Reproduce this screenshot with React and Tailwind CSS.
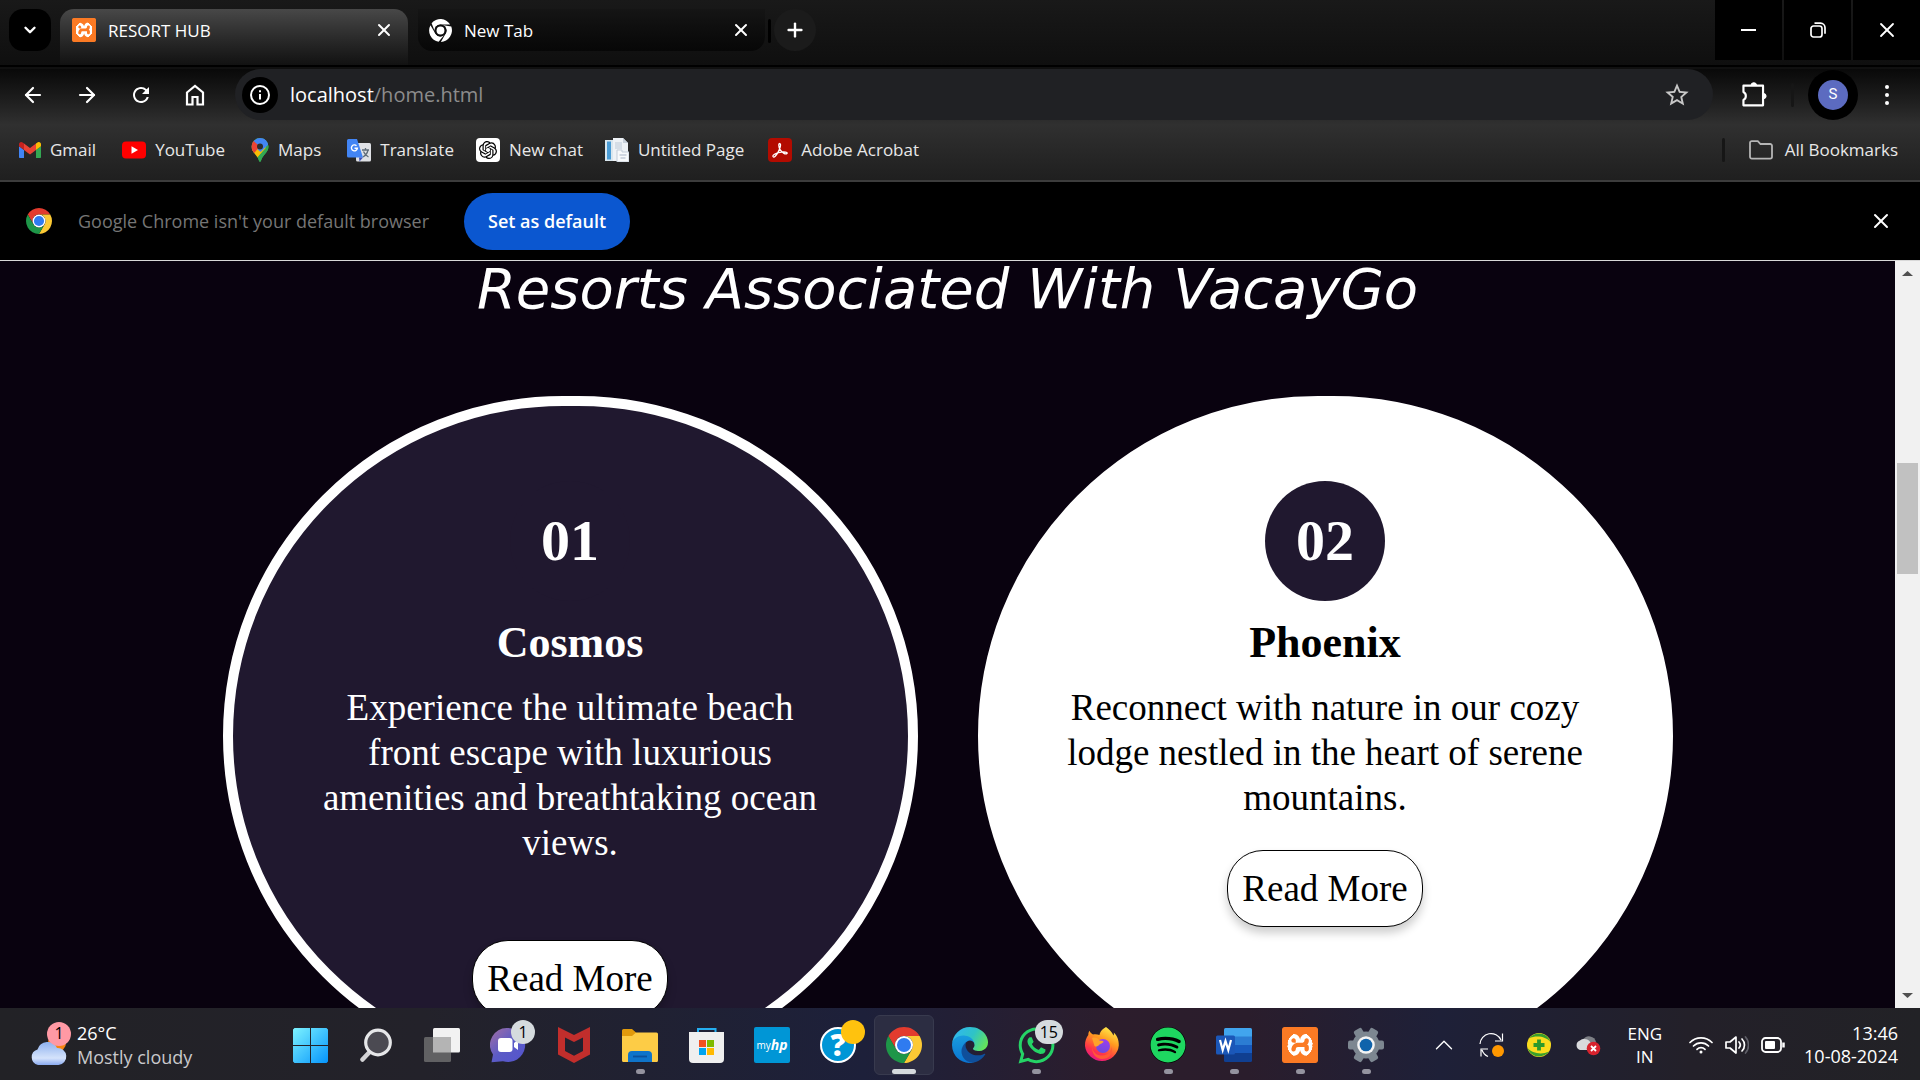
import React from "react";
import { ArrowLeft, ArrowRight, ChevronDown, ChevronUp, Plus, X } from "lucide-react";
import { MdRefresh, MdStarBorder } from "react-icons/md";
import { SiXampp, SiOpenai } from "react-icons/si";
import { FaSpotify, FaWhatsapp } from "react-icons/fa";

const UI = "font-['Segoe_UI','Open_Sans',sans-serif]";
const SERIF = "font-['Goudy_Old_Style','Liberation_Serif',serif]";

function Chrome({ className }) {
  const seg = "M24 13H43.05A22 22 0 0 0 4.95 13L14.47 29.5A11 11 0 0 1 24 13Z";
  return (
    <svg viewBox="2 2 44 44" className={className} aria-hidden="true">
      <path d={seg} fill="#e33b2e" />
      <path d={seg} fill="#fcc934" transform="rotate(120 24 24)" />
      <path d={seg} fill="#1e9648" transform="rotate(240 24 24)" />
      <circle cx="24" cy="24" r="11" fill="#fff" />
      <circle cx="24" cy="24" r="8.6" fill="#2f7bf0" />
    </svg>
  );
}

function ChromeMono({ className }) {
  const seg = "M24 12.5H42.5A22 22 0 0 0 7 10L13.5 27A11 11 0 0 1 24 12.5Z";
  return (
    <svg viewBox="2 2 44 44" className={className} fill="#fff" aria-hidden="true">
      <path d={seg} />
      <path d={seg} transform="rotate(120 24 24)" />
      <path d={seg} transform="rotate(240 24 24)" />
      <circle cx="24" cy="24" r="11.5" fill="#0c0c0c" />
      <circle cx="24" cy="24" r="7.5" />
    </svg>
  );
}

function Xampp({ className }) {
  return (
    <span className={`${className} overflow-hidden bg-[#fb7a24]`}>
      <span className="flex size-full items-center justify-center bg-[radial-gradient(closest-side,#fff_70%,#fb7a24_71%)]">
        <SiXampp className="size-full text-[#fb7a24]" />
      </span>
    </span>
  );
}

function Gmail() {
  return (
    <svg viewBox="52 42 88 66" className="w-[22px]" aria-hidden="true">
      <path fill="#4285f4" d="M58 108h14V74L52 59v43c0 3.32 2.69 6 6 6" />
      <path fill="#34a853" d="M120 108h14c3.32 0 6-2.69 6-6V59l-20 15" />
      <path fill="#fbbc04" d="M120 48v26l20-15v-8c0-7.42-8.47-11.65-14.4-7.2" />
      <path fill="#ea4335" d="M72 74V48l24 18 24-18v26L96 92" />
      <path fill="#c5221f" d="M52 51v8l20 15V48l-5.6-4.2c-5.94-4.45-14.4-.22-14.4 7.2" />
    </svg>
  );
}

function YouTube() {
  return (
    <svg viewBox="0 0 24 18" className="w-6" aria-hidden="true">
      <rect width="24" height="17" y=".5" rx="4" fill="#f00" />
      <path d="M9.5 5.2v7.6L16 9z" fill="#fff" />
    </svg>
  );
}

function MapsPin() {
  return (
    <svg viewBox="0 0 18 24" className="h-6" aria-hidden="true">
      <clipPath id="pin">
        <path d="M9 0a8.5 8.5 0 0 0-8.5 8.5c0 3 1.5 5 3.5 7.500 2 2.500 3.300 4 4 6.800.3 1.400 1.700 1.400 2 0 .7-2.800 2-4.300 4-6.800s3.500-4.500 3.500-7.500A8.500 8.500 0 0 0 9 0z" />
      </clipPath>
      <g clipPath="url(#pin)">
        <rect width="18" height="24" fill="#34a853" />
        <path d="M-1 13.500 9 3l6 7-11.500 13z" fill="#fbbc04" />
        <path d="M18 6 9.500 14 5 10 15-2h4z" fill="#4285f4" />
        <path d="M18 6.500 9 16.500 3 24h15z" fill="#34a853" />
        <path d="M-2 1 3 2.500 9 8l-7.500 9z" fill="#ea4335" />
        <path d="M2.500 3 9-2l7 4-7 6.500z" fill="#4285f4" />
      </g>
      <circle cx="9" cy="8.400" r="3" fill="#2d2d2d" />
    </svg>
  );
}

function Translate() {
  return (
    <svg viewBox="0 0 24 24" className="w-6" aria-hidden="true">
      <rect x="9" y="5" width="15" height="18.500" rx="1.500" fill="#dfe1e5" />
      <path d="M15 12h7M18.500 10v2M21 12c-.6 3-2.500 5.500-5 7M16.500 13.500c1 2.500 3 4.500 5 5.500" stroke="#5f6c78" strokeWidth="1.300" fill="none" />
      <path d="M1.500 1H10l6 18.500H1.500A1.500 1.500 0 0 1 0 18V2.500A1.500 1.500 0 0 1 1.500 1z" fill="#4285f4" />
      <path d="m12 19.500 4 0-3.500 4z" fill="#3c50b8" />
      <path d="M9.500 7.700a3 3 0 1 0 .9 2.500H7.500" stroke="#fff" strokeWidth="1.400" fill="none" />
    </svg>
  );
}

function PageIcon() {
  return (
    <svg viewBox="0 0 24 24" className="w-6" aria-hidden="true">
      <path d="M0 2h10v21H0z" fill="#d9e6ee" />
      <path d="M2 3.500h4v18H2z" fill="#4a9cd6" />
      <path d="M8 0h10l5 5v18H8z" fill="#eef2f6" />
      <path d="M18 0v5h5z" fill="#c7d0da" />
      <path d="M10 4h7v7h-7z" fill="#d5dde6" />
      <path d="M12 12h5v2h7v10H12z" fill="#f8fafc" stroke="#c2ccd8" />
      <path d="M14.500 17h7M15.500 20h5" stroke="#c2ccd8" strokeWidth="1.500" />
    </svg>
  );
}

function Acrobat() {
  return (
    <svg viewBox="0 0 24 24" className="w-6" aria-hidden="true">
      <rect width="24" height="24" rx="4" fill="#b30b00" />
      <path d="M5 18.500c-.8-1.200 3-3.300 5.500-3.900s6.500-1.300 8.300 0c1.300 1.200-1 1.900-3.200.5-2.600-1.700-4.700-4.600-4.800-7.800 0-2.400 1.900-2.400 1.700.2-.2 3.500-3.600 9.300-5.500 11-.8.700-1.600.700-2 0z" fill="none" stroke="#fff" strokeWidth="1.300" />
    </svg>
  );
}

const bookmarks = [
  { label: "Gmail", icon: <Gmail />, pad: "pr-[26px]" },
  { label: "YouTube", icon: <YouTube />, pad: "pr-[26px]" },
  { label: "Maps", icon: <MapsPin />, pad: "pr-[26px]" },
  { label: "Translate", icon: <Translate />, pad: "pr-[22px]" },
  {
    label: "New chat",
    icon: (
      <span className="flex size-6 items-center justify-center rounded bg-white">
        <SiOpenai className="size-[18px] text-black" />
      </span>
    ),
    pad: "pr-[22px]",
  },
  { label: "Untitled Page", icon: <PageIcon />, pad: "pr-6" },
  { label: "Adobe Acrobat", icon: <Acrobat />, pad: "" },
];

function TabStrip() {
  return (
    <div className="flex h-[65px] shrink-0 items-start bg-linear-to-b from-[#191919] to-[#0f0f0f] text-[17px] text-white">
      <button aria-label="Search tabs" className="mt-[9px] ml-[9px] flex size-[42px] shrink-0 items-center justify-center rounded-[14px] bg-black">
        <ChevronDown className="size-[18px]" strokeWidth={3.2} />
      </button>
      <div className="mt-[9px] ml-[9px] flex h-14 w-[348px] items-start rounded-t-[14px] bg-linear-to-b from-[#484848] to-[#121212]">
        <div className="flex h-[42px] w-full items-center pr-[14px] pl-3">
          <Xampp className="size-6 rounded-[2px]" />
          <span className="ml-3 pt-[2px]">RESORT HUB</span>
          <button aria-label="Close RESORT HUB" className="ml-auto">
            <X className="size-5" strokeWidth={2.4} />
          </button>
        </div>
      </div>
      <div className="mt-[9px] ml-[10px] flex h-[42px] w-[347px] items-center rounded-b-[14px] bg-linear-to-b from-[#151515] to-[#070707] pr-[14px] pl-[11px]">
        <ChromeMono className="size-[23px]" />
        <span className="ml-3 pt-[2px]">New Tab</span>
        <button aria-label="Close New Tab" className="ml-auto">
          <X className="size-5" strokeWidth={2.4} />
        </button>
      </div>
      <span className="mt-[19px] ml-[3px] h-6 w-[3px] rounded bg-black" />
      <button aria-label="New tab" className="mt-[9px] ml-[3px] flex size-[42px] items-center justify-center rounded-full bg-[#1b1b1b]">
        <Plus className="size-[22px]" strokeWidth={2.6} />
      </button>
      <div className="ml-auto flex h-[60px] gap-[2px]">
        <button aria-label="Minimize" className="flex w-[67px] items-center justify-center bg-black">
          <span className="h-[2px] w-[15px] bg-white" />
        </button>
        <button aria-label="Restore" className="flex w-[67px] items-center justify-center bg-black">
          <svg viewBox="0 0 16 16" className="size-4" fill="none" stroke="#fff" strokeWidth="1.700">
            <rect x="1" y="4" width="11" height="11" rx="2.500" />
            <path d="M4.500 1.200h6A4.500 4.500 0 0 1 15 5.700v6" />
          </svg>
        </button>
        <button aria-label="Close window" className="flex w-[67px] items-center justify-center bg-black">
          <X className="size-6" strokeWidth={1.8} />
        </button>
      </div>
    </div>
  );
}

function Toolbar() {
  return (
    <div className="flex h-[51px] items-center pr-[26px] pl-[21px] text-white">
      <div className="flex shrink-0 items-center gap-[30px]">
        <button aria-label="Back"><ArrowLeft className="size-6" strokeWidth={2.2} /></button>
        <button aria-label="Forward"><ArrowRight className="size-6" strokeWidth={2.2} /></button>
        <button aria-label="Reload"><MdRefresh className="size-6" /></button>
        <button aria-label="Home">
          <svg viewBox="0 0 24 24" className="size-6" fill="none" stroke="#fff" strokeWidth="2.200">
            <path d="M4 9.500 12 3l8 6.500V21.500h-5.500V14h-5v7.500H4z" />
          </svg>
        </button>
      </div>
      <div className="ml-7 flex h-[51px] flex-1 items-center rounded-full bg-[#202124] pr-[22px] pl-[7px]">
        <button aria-label="Site information" className="flex size-9 items-center justify-center rounded-full bg-black">
          <svg viewBox="0 0 22 22" className="size-[22px]" fill="none" stroke="#fff" strokeWidth="2">
            <circle cx="11" cy="11" r="9" />
            <path d="M11 10v5.500M11 6.300v2" />
          </svg>
        </button>
        <div className="ml-3 flex-1 text-[20px]">
          <span>localhost</span>
          <span className="text-[#8c8c8c]">/home.html</span>
        </div>
        <button aria-label="Bookmark this tab">
          <MdStarBorder className="size-7 text-[#c7c7c7]" />
        </button>
      </div>
      <button aria-label="Extensions" className="ml-7">
        <svg viewBox="0 0 26 26" className="size-[26px]" fill="none" stroke="#fff" strokeWidth="2.200" strokeLinejoin="round">
          <path d="M3 5h20v20H3v-5.500a4.500 4.500 0 0 0 0-8z" transform="translate(-.5 -1.200) scale(.98)" />
          <path d="M10 3.500a2.800 2.800 0 0 1 5.600 0zM22.500 11.500a2.600 2.600 0 0 1 0 5.200z" fill="#fff" strokeWidth="1" />
        </svg>
      </button>
      <span className="ml-6 h-6 w-[3px] rounded bg-[#161616]" />
      <button aria-label="Profile" className="ml-[14px] flex size-[50px] items-center justify-center rounded-full bg-black">
        <span className="flex size-[30px] items-center justify-center rounded-full bg-[#5c6bc0] font-[Roboto] text-[15px]">S</span>
      </button>
      <button aria-label="Menu" className="ml-[22px] flex w-[14px] flex-col items-center gap-1">
        <span className="size-1 rounded-full bg-white" />
        <span className="size-1 rounded-full bg-white" />
        <span className="size-1 rounded-full bg-white" />
      </button>
    </div>
  );
}

function BookmarksBar() {
  return (
    <nav className="flex h-[60px] items-center pr-[22px] pl-[19px] text-[17px] text-[#e8e8e8]">
      {bookmarks.map((b) => (
        <a key={b.label} href="#" className={`flex items-center gap-[9px] whitespace-nowrap ${b.pad}`}>
          {b.icon}
          {b.label}
        </a>
      ))}
      <span className="ml-auto h-6 w-[3px] rounded bg-[#161616]" />
      <a href="#" className="ml-6 flex items-center gap-3">
        <svg viewBox="0 0 24 20" className="w-6" fill="none" stroke="#b5b5b5" strokeWidth="1.800">
          <path d="M1 3a1.800 1.800 0 0 1 1.800-1.800h6L11.500 4h9.700A1.800 1.800 0 0 1 23 5.800v11a1.800 1.800 0 0 1-1.800 1.800H2.800A1.800 1.800 0 0 1 1 16.800z" />
        </svg>
        All Bookmarks
      </a>
    </nav>
  );
}

function InfoBar() {
  return (
    <div className="flex h-[79px] shrink-0 items-center border-b border-[#d8d8d8] bg-black pr-[27px] pl-[26px]">
      <Chrome className="size-[26px]" />
      <span className="ml-[26px] text-[18px] text-[#757575]">Google Chrome isn't your default browser</span>
      <button className="ml-[35px] h-[57px] rounded-full bg-[#0b57d0] px-6 text-[18px] font-semibold text-white">Set as default</button>
      <button aria-label="Dismiss" className="ml-auto">
        <X className="size-6 text-white" strokeWidth={2} />
      </button>
    </div>
  );
}

function ResortCard({ number, name, text, dark, gap }) {
  return (
    <article
      className={`flex h-[680px] w-[695px] shrink-0 flex-col items-center rounded-[340px] border-[10px] border-white pt-[75px] text-center ${dark ? "bg-[#20182f] text-white" : "bg-white text-black"}`}
    >
      <div className="flex size-[120px] items-center justify-center rounded-full bg-[#20182f] text-[58px] leading-none font-bold text-white">{number}</div>
      <h2 className="mt-[14px] text-[44px] leading-[56px] font-bold">{name}</h2>
      <p className="mt-[14px] w-[521px] text-[37px] leading-[45px]">{text}</p>
      <button className={`${gap} flex h-[77px] shrink-0 items-center rounded-[36px] border border-black bg-white px-[14px] text-[37px] leading-none whitespace-nowrap text-black shadow-[0_6px_10px_rgba(0,0,0,0.2)]`}>
        Read More
      </button>
    </article>
  );
}

function Page() {
  return (
    <div className="flex min-h-0 flex-1 bg-[#09020f]">
      <main className={`${SERIF} flex min-w-0 flex-1 flex-col`}>
        <h1 className="text-center font-['Segoe_Script','DejaVu_Sans',cursive] text-[56px] leading-[56px] whitespace-nowrap text-white italic">Resorts Associated With VacayGo</h1>
        <div className="flex min-h-0 flex-1 items-start justify-center gap-[60px] overflow-hidden pt-[79px]">
          <ResortCard
            dark
            number="01"
            name="Cosmos"
            text="Experience the ultimate beach front escape with luxurious amenities and breathtaking ocean views."
            gap="mt-[75px]"
          />
          <ResortCard
            number="02"
            name="Phoenix"
            text="Reconnect with nature in our cozy lodge nestled in the heart of serene mountains."
            gap="mt-[30px]"
          />
        </div>
      </main>
      <div className="flex w-[25px] flex-col items-center bg-[#f1f1f1]" aria-hidden="true">
        <svg viewBox="0 0 11 5" className="mt-[10px] w-[11px]"><path d="M5.500 0 11 5H0z" fill="#505050" /></svg>
        <div className="mt-[187px] h-[111px] w-[21px] bg-[#c1c1c1]" />
        <svg viewBox="0 0 11 5" className="mt-auto mb-[10px] w-[11px]"><path d="M5.500 5 11 0H0z" fill="#505050" /></svg>
      </div>
    </div>
  );
}

function WeatherIcon() {
  return (
    <svg viewBox="0 0 42 44" className="h-11 w-[42px] overflow-visible" aria-hidden="true">
      <defs>
        <linearGradient id="cl" x1="0" y1="0" x2="0" y2="1">
          <stop offset="0" stopColor="#8fb2ee" />
          <stop offset=".7" stopColor="#d5e3fb" />
          <stop offset="1" stopColor="#8aaaf0" />
        </linearGradient>
      </defs>
      <circle cx="27" cy="20" r="9" fill="#f78411" />
      <path d="M8 42a8 8 0 0 1-.5-15.500A10.500 10.500 0 0 1 27 25a8.500 8.500 0 1 1 1.500 17z" fill="url(#cl)" />
      <circle cx="29" cy="11" r="12" fill="#ff99a4" />
    </svg>
  );
}

function Windows() {
  return (
    <svg viewBox="0 0 35 35" className="size-[35px]" aria-hidden="true">
      <defs>
        <linearGradient id="win" x1="0" y1="0" x2="35" y2="35" gradientUnits="userSpaceOnUse">
          <stop stopColor="#7df3ff" />
          <stop offset="1" stopColor="#0594fb" />
        </linearGradient>
      </defs>
      <path fill="url(#win)" d="M1.500 0H17v17H0V1.500zM18 0h15.500L35 1.500V17H18zM0 18h17v17H1.500L0 33.500zM18 18h17v15.500L33.500 35H18z" />
    </svg>
  );
}

function Search() {
  return (
    <svg viewBox="0 0 34 34" className="size-[34px]" aria-hidden="true">
      <path d="m3.500 31.500 9-9.500" stroke="#d3d3d5" strokeWidth="4.500" strokeLinecap="round" />
      <circle cx="19" cy="14.500" r="12.300" fill="#4b4a52" stroke="#e6e7e9" strokeWidth="3.200" />
    </svg>
  );
}

function TaskView() {
  return (
    <svg viewBox="0 0 36 34" className="w-9" aria-hidden="true">
      <rect x="9" width="27" height="24.500" rx="1.500" fill="#f2f2f2" />
      <rect y="9" width="27" height="25" rx="1.500" fill="#616163" />
      <path d="M9 9h18v15.500H9z" fill="#b4b4b4" />
    </svg>
  );
}

function Teams() {
  return (
    <svg viewBox="0 0 36 36" className="w-9" aria-hidden="true">
      <defs>
        <linearGradient id="tm" x1="0" y1="0" x2="1" y2="1">
          <stop stopColor="#a46fa4" />
          <stop offset=".5" stopColor="#5b5bc5" />
          <stop offset="1" stopColor="#5454cf" />
        </linearGradient>
      </defs>
      <path d="M18 1a17 17 0 1 1-5 33.200L1.500 35.200 3 27.500A17 17 0 0 1 18 1z" fill="url(#tm)" />
      <rect x="8" y="11" width="14.500" height="14" rx="3" fill="#fff" />
      <path d="m24 16 4-3v10l-4-3z" fill="#fff" />
    </svg>
  );
}

function McAfee() {
  return (
    <svg viewBox="0 0 32 36" className="w-8" aria-hidden="true">
      <path d="M0 0 16 8 32 0v27.500L16 36 0 27.500zM7 10.500V24l9 4.800 9-4.800V10.500l-9 4.500z" fill="#c22e2c" fillRule="evenodd" />
    </svg>
  );
}

function Explorer() {
  return (
    <svg viewBox="0 0 36 33" className="w-9" aria-hidden="true">
      <path d="M0 1.500A1.500 1.500 0 0 1 1.500 0H10l4 3.500V10H0z" fill="#e19a0c" />
      <path d="M0 7h10l4-3.500h20.500A1.500 1.500 0 0 1 36 5v26.500a1.500 1.500 0 0 1-1.500 1.500h-33A1.500 1.500 0 0 1 0 31.500z" fill="#fdcc46" />
      <path d="M6 33v-7a4 4 0 0 1 4-4h16a4 4 0 0 1 4 4v7z" fill="#0f74ca" />
      <path d="M11 27.500h14" stroke="#0c519c" strokeWidth="1.800" />
    </svg>
  );
}

function Store() {
  return (
    <svg viewBox="0 0 35 35" className="w-[35px]" aria-hidden="true">
      <path d="M9 6V1h17.500v5" fill="none" stroke="#25aef0" strokeWidth="2" />
      <path d="M0 4h35v27a4 4 0 0 1-4 4H4a4 4 0 0 1-4-4z" fill="#efefef" />
      <path d="M10 12h7v7h-7z" fill="#f25022" />
      <path d="M18 12h7v7h-7z" fill="#7fba00" />
      <path d="M10 20h7v7h-7z" fill="#00a4ef" />
      <path d="M18 20h7v7h-7z" fill="#ffb900" />
    </svg>
  );
}

function MyHp() {
  return (
    <span className="flex size-9 items-center justify-center rounded-[2px] bg-[#0096d6] text-[10px] leading-none text-white">
      my<b className="text-[14px] italic">hp</b>
    </span>
  );
}

function Help() {
  return (
    <span className="relative flex size-9 items-center justify-center rounded-full border-2 border-white bg-[#0096d6] text-[30px] leading-none font-extrabold text-white">
      ?
      <span className="absolute -top-[9px] -right-[11px] size-6 rounded-full bg-[#ffc20e]" />
    </span>
  );
}

function Edge() {
  return (
    <svg viewBox="0 0 256 256" className="w-9" aria-hidden="true">
      <defs>
        <linearGradient id="e1" x1="0" y1=".2" x2="1" y2=".6">
          <stop stopColor="#30b6f2" />
          <stop offset=".55" stopColor="#2fc3c6" />
          <stop offset="1" stopColor="#63e45c" />
        </linearGradient>
        <linearGradient id="e2" x1=".4" y1="0" x2=".4" y2="1">
          <stop stopColor="#1a9fdf" />
          <stop offset="1" stopColor="#0a74d2" />
        </linearGradient>
      </defs>
      <path fill="#0f4f9b" d="M231.070 190.540c-3.410 1.770-6.930 3.320-10.540 4.640a101.930 101.930 0 0 1-35.910 6.460c-47.330 0-88.560-32.560-88.560-74.340a31.500 31.500 0 0 1 16.430-27.310c-42.800 1.800-53.800 46.400-53.800 72.530 0 73.880 68.090 81.370 82.760 81.370 7.910 0 19.840-2.300 27-4.560l1.310-.44a128.340 128.340 0 0 0 66.600-52.800 4 4 0 0 0-5.290-5.550z" />
      <path fill="url(#e2)" d="M105.730 241.420a79.200 79.200 0 0 1-22.740-21.340 80.720 80.720 0 0 1 29.530-120.100c3.120-1.470 8.450-4.130 15.540-4a32.350 32.350 0 0 1 25.690 13 31.880 31.880 0 0 1 6.360 18.660c0-.21 24.460-79.600-80-79.600-43.900 0-80 41.660-80 78.210a130.150 130.150 0 0 0 12.110 56 128 128 0 0 0 156.380 67.110 75.550 75.550 0 0 1-62.780-8z" />
      <path fill="url(#e1)" d="M152.330 148.860c-.81 1-3.300 2.500-3.300 5.660 0 2.610 1.700 5.120 4.720 7.230 14.380 10 41.490 8.680 41.560 8.680a59.560 59.560 0 0 0 30.270-8.350 61.380 61.380 0 0 0 30.430-52.880c.26-22.410-8-37.310-11.340-43.910C223.460 23.840 177.720 0 128 0A128 128 0 0 0 0 126.200c.48-36.540 36.800-66.050 80-66.050 3.500 0 23.460.34 42 10.070 16.340 8.580 24.900 18.940 30.850 29.210 6.180 10.670 7.280 24.150 7.280 29.520s-2.740 13.330-7.800 19.910z" />
    </svg>
  );
}

function Firefox() {
  return (
    <svg viewBox="0 0 36 36" className="w-9" aria-hidden="true">
      <defs>
        <linearGradient id="ff" x1=".8" y1="0" x2=".3" y2="1">
          <stop stopColor="#fff44f" />
          <stop offset=".4" stopColor="#ff9a1f" />
          <stop offset=".75" stopColor="#ff3647" />
          <stop offset="1" stopColor="#e31587" />
        </linearGradient>
        <linearGradient id="fp" x1=".7" y1="0" x2=".4" y2="1">
          <stop stopColor="#9d3df0" />
          <stop offset="1" stopColor="#6c4ade" />
        </linearGradient>
      </defs>
      <path d="M22 0c3 2 6 5 7.500 8.500.5-.8.500-2 .3-3C33 8.500 35 13 34.800 18.500A17 17 0 0 1 1 19c-.2-5 1.500-8.500 3.300-11 0-1.500.3-3 1.200-4.200.7 1.700 2 2.800 3.500 3.700 2-.5 4.500-.2 6.500.5C16 4.500 19 1.500 22 0z" fill="url(#ff)" />
      <circle cx="19" cy="19" r="7" fill="url(#fp)" />
      <path d="M8 11c3-1 6 0 7.500 2.500 2 .2 4 .3 4 1.300 0 1.200-3.500 2.200-4.500 3.200-1.300 1.500-3 2-4.500 1z" fill="#ffa32a" />
      <path d="M8 20c1 6 5 8.500 10 8.500 6 0 9.500-4 9.500-9 2 8-3 12.500-9.500 12.500-6 0-10-5-10-12z" fill="#ff5a36" />
    </svg>
  );
}

function Word() {
  return (
    <svg viewBox="0 0 36 34" className="w-9" aria-hidden="true">
      <path d="M8 1.500A1.500 1.500 0 0 1 9.500 0h25A1.500 1.500 0 0 1 36 1.500V9H8z" fill="#41a5ee" />
      <path d="M8 8.500h28V17H8z" fill="#2b7cd3" />
      <path d="M8 17h28v8.500H8z" fill="#185abd" />
      <path d="M8 25h28v7.500a1.500 1.500 0 0 1-1.500 1.500h-25A1.500 1.500 0 0 1 8 32.500z" fill="#103f91" />
      <rect y="7.500" width="19" height="19" rx="1.500" fill="#1b57b8" />
      <path d="m4 12 2.700 10L9.500 13l2.800 9L15 12" fill="none" stroke="#fff" strokeWidth="2.200" />
    </svg>
  );
}

function Settings() {
  return (
    <svg viewBox="0 0 36 36" className="w-9" aria-hidden="true">
      <g fill="#7d8791">
        <circle cx="18" cy="18" r="13.500" />
        {[30, 90, 150].map((a) => (
          <rect key={a} x="13.500" y="0" width="9" height="36" rx="2" transform={`rotate(${a} 18 18)`} />
        ))}
      </g>
      <circle cx="18" cy="18" r="8.800" fill="#f4f4f4" />
      <circle cx="18" cy="18" r="6.300" fill="#0f63ab" />
    </svg>
  );
}

function Badge({ children }) {
  return (
    <span className="absolute top-1 right-[2px] flex h-6 min-w-6 items-center justify-center rounded-full bg-[#d5dbde] px-[5px] text-[16px] leading-none text-black">{children}</span>
  );
}

const apps = [
  { name: "Start", icon: <Windows /> },
  { name: "Search", icon: <Search /> },
  { name: "Task View", icon: <TaskView /> },
  { name: "Chat", icon: <Teams />, badge: "1" },
  { name: "McAfee", icon: <McAfee /> },
  { name: "File Explorer", icon: <Explorer />, open: true },
  { name: "Microsoft Store", icon: <Store /> },
  { name: "myHP", icon: <MyHp /> },
  { name: "HP Support", icon: <Help /> },
  { name: "Google Chrome", icon: <Chrome className="size-9" />, active: true },
  { name: "Microsoft Edge", icon: <Edge /> },
  { name: "WhatsApp", icon: <FaWhatsapp className="size-[41px] text-[#25d366]" />, badge: "15", open: true },
  { name: "Firefox", icon: <Firefox /> },
  {
    name: "Spotify",
    icon: (
      <span className="rounded-full bg-black">
        <FaSpotify className="size-9 text-[#1ed760]" />
      </span>
    ),
    open: true,
  },
  { name: "Word", icon: <Word />, open: true },
  { name: "XAMPP", icon: <Xampp className="size-9 rounded-[3px]" />, open: true },
  { name: "Settings", icon: <Settings />, open: true },
];

function Taskbar() {
  return (
    <footer className="flex h-[72px] shrink-0 items-center bg-[linear-gradient(90deg,#222226_0%,#23222a_22%,#1d203a_45%,#2c1d2c_58%,#2a1d2c_65%,#1e2038_75%,#232029_88%,#222226_100%)] pt-[2px] text-[18px] text-white">
      <button className="relative flex w-[280px] shrink-0 items-center gap-[5px] pl-[30px] text-left">
        <WeatherIcon />
        <span className="absolute top-0 left-[47px] flex size-6 items-center justify-center text-[16px] text-black">1</span>
        <span className="leading-6">
          26°C
          <br />
          <span className="text-[#c9c9cc]">Mostly cloudy</span>
        </span>
      </button>
      <div className="flex gap-[6px]">
        {apps.map((a) => (
          <button
            key={a.name}
            aria-label={a.name}
            className={`relative flex size-[60px] items-center justify-center rounded-md border ${a.active ? "border-[#383a4e] bg-[#2c2d42]" : "border-transparent"}`}
          >
            {a.icon}
            {a.badge && <Badge>{a.badge}</Badge>}
            {a.open && <span className="absolute bottom-0 h-[5px] w-[9px] rounded-full bg-[#94939f]" />}
            {a.active && <span className="absolute bottom-0 h-[5px] w-6 rounded-full bg-[#d5dadd]" />}
          </button>
        ))}
      </div>
      <div className="ml-auto flex items-center pr-[22px]">
        <button aria-label="Show hidden icons"><ChevronUp className="size-[30px]" strokeWidth={1.1} /></button>
        <svg viewBox="0 0 26 26" className="ml-5 size-[26px]" fill="none" stroke="#fff" strokeWidth="1.200">
          <path d="M1 12A11 11 0 0 1 22 8M23.500 1.500V9h-7.500M9 24.500A11 11 0 0 1 3 18M2 24.500V17h7" />
          <circle cx="19" cy="19" r="6" fill="#ff9800" stroke="none" />
        </svg>
        <svg viewBox="0 0 24 24" className="ml-[22px] size-6">
          <circle cx="12" cy="12" r="12" fill="#fbdc1e" />
          <path d="M2 5.500C8-2 20-1 23.500 9 19 3.500 9 2 2 5.500zM22 18.500C16 26 4 25 .5 15c4.500 5.500 14.500 7 21.500 3.500z" fill="#39a02c" />
          <path d="M12 6.500v11M6.500 12h11" stroke="#2c9a2c" strokeWidth="3.800" />
        </svg>
        <svg viewBox="0 0 26 22" className="ml-6 w-[26px]">
          <path d="M8 6a7 7 0 0 1 13 2l-5 8H8z" fill="#7d7f85" />
          <path d="M5 16a5 5 0 0 1 0-9.500 7 7 0 0 1 11 3V16z" fill="#d9dadd" />
          <circle cx="18.500" cy="14.500" r="6.800" fill="#d8232e" />
          <path d="m16 12 5 5m0-5-5 5" stroke="#fff" strokeWidth="1.800" />
        </svg>
        <button className="ml-[26px] text-center text-[17px] leading-[23px]">
          ENG
          <br />
          IN
        </button>
        <button aria-label="Network, volume, battery" className="ml-[27px] flex items-center gap-3">
          <svg viewBox="0 0 24 18" className="w-6" fill="none" stroke="#fff" strokeWidth="1.700" strokeLinecap="round">
            <path d="M1 6.500a15.500 15.500 0 0 1 22 0M4.500 10a10.500 10.500 0 0 1 15 0M8 13.300a5.800 5.800 0 0 1 8 0" />
            <circle cx="12" cy="16" r="1.500" fill="#fff" stroke="none" />
          </svg>
          <svg viewBox="0 0 24 20" className="w-6" fill="none" stroke="#fff" strokeWidth="1.700" strokeLinecap="round" strokeLinejoin="round">
            <path d="M1 7v6h4l6 5V2L5 7zM14 7a4.500 4.500 0 0 1 0 6M17 4a8.500 8.500 0 0 1 0 12" />
            <path d="M20.500 2a12 12 0 0 1 0 16" stroke="#5f5f68" />
          </svg>
          <svg viewBox="0 0 24 16" className="w-6" fill="none" stroke="#fff" strokeWidth="1.800">
            <rect x="1" y="1" width="19" height="14" rx="3.500" />
            <rect x="4" y="4" width="10" height="8" rx="1" fill="#fff" stroke="none" />
            <path d="M22.500 5.500v5" strokeWidth="2.500" />
          </svg>
        </button>
        <button className="ml-[19px] text-right leading-[23px]">
          13:46
          <br />
          10-08-2024
        </button>
      </div>
    </footer>
  );
}

export default function App() {
  return (
    <div className={`${UI} flex h-screen flex-col overflow-hidden bg-black`}>
      <TabStrip />
      <div className="shrink-0 border-t-2 border-black bg-[#101010] pt-[2px]">
        <div className="border-b-2 border-[#3c3c3c] bg-linear-to-b from-[#090909] via-[#303030] to-[#1f1f1f]">
          <Toolbar />
          <BookmarksBar />
        </div>
      </div>
      <InfoBar />
      <Page />
      <Taskbar />
    </div>
  );
}
